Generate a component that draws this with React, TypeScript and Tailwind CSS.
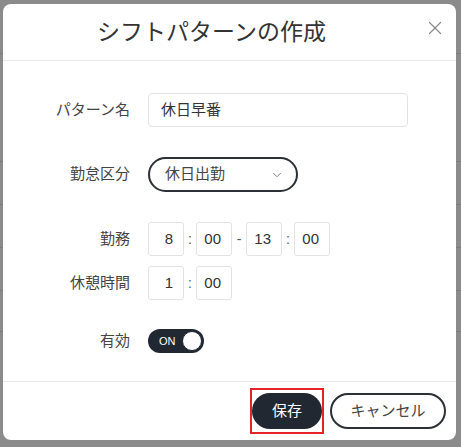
import React from "react";
import { ChevronDown, X } from "lucide-react";

const font = {
  fontFamily: '"Liberation Sans", "Noto Sans CJK JP", sans-serif',
};

const TimeBox = ({ value }: { value: string }) => (
  <div className="w-[36px] h-[34px] border border-[#e3e3e3] rounded-[3px] flex items-center justify-end pr-[10px] text-[15px] text-[#333]">
    {value}
  </div>
);

const Sep = ({ char }: { char: string }) => (
  <span className="w-[12px] text-center text-[14px] text-[#555]">{char}</span>
);

const Row = ({ label, children, className = "" }: { label: string; children: React.ReactNode; className?: string }) => (
  <div className={`flex items-center gap-[18px] ${className}`}>
    <div className="w-[127px] text-right text-[15px] text-[#444]">{label}</div>
    {children}
  </div>
);

const App = () => {
  const bgRows = ["h-[54px]", "h-[108px]", "h-[43px]", "h-[43px]", "h-[43px]", "h-[41px]"];

  return (
    <div className="relative w-[461px] h-[447px] bg-[#8b8b8b] overflow-hidden" style={font}>
      {/* table behind the overlay */}
      <div className="flex flex-col">
        {bgRows.map((h, i) => (
          <div key={i} className={`${h} border-b border-[#7c7c7c]`} />
        ))}
      </div>

      <div className="absolute left-[3px] top-[4px] w-[453px] h-[436px] bg-white rounded-lg flex flex-col">
        <div className="h-[57px] flex items-center border-b border-[#e8e8e8]">
          <h1 className="flex-1 text-center text-[23px] text-[#333] pl-[2px]">シフトパターンの作成</h1>
          <button className="w-[34px] h-[34px] flex items-center justify-center mr-[4px] -mt-[8px] text-[#8a8a8a]">
            <X size={22} strokeWidth={1.3} />
          </button>
        </div>

        <div className="flex-1 flex flex-col pt-[32px]">
          <Row label="パターン名">
            <div className="w-[260px] h-[34px] border border-[#e3e3e3] rounded-[4px] flex items-center px-[12px] text-[15px] text-[#333]">
              休日早番
            </div>
          </Row>

          <Row label="勤怠区分" className="mt-[30px]">
            <div className="w-[150px] h-[35px] border-2 border-[#2b2f36] rounded-full flex items-center justify-between pl-[15px] pr-[12px] text-[15px] text-[#444]">
              <span>休日出勤</span>
              <ChevronDown size={14} strokeWidth={1.4} className="text-[#666]" />
            </div>
          </Row>

          <Row label="勤務" className="mt-[30px]">
            <div className="flex items-center">
              <TimeBox value="8" />
              <Sep char=":" />
              <TimeBox value="00" />
              <span className="w-[14px] text-center text-[14px] text-[#555]">-</span>
              <TimeBox value="13" />
              <Sep char=":" />
              <TimeBox value="00" />
            </div>
          </Row>

          <Row label="休憩時間" className="mt-[10px]">
            <div className="flex items-center">
              <TimeBox value="1" />
              <Sep char=":" />
              <TimeBox value="00" />
            </div>
          </Row>

          <Row label="有効" className="mt-[29px]">
            <div className="w-[56px] h-[24px] rounded-full bg-[#222831] flex items-center justify-between pl-[11px] pr-[2px]">
              <span className="text-[11px] text-white">ON</span>
              <span className="w-[20px] h-[20px] rounded-full bg-white border border-[#222831]" />
            </div>
          </Row>
        </div>

        <div className="h-[59px] border-t border-[#e8e8e8] flex items-center justify-end gap-[6px] pr-[10px]">
          <div className="border-2 border-[#e8232a] py-[3px]">
            <button className="w-[70px] h-[36px] rounded-full bg-[#222831] text-white text-[15px]">保存</button>
          </div>
          <button className="w-[116px] h-[36px] rounded-full border-2 border-[#2b2f36] bg-white text-[#444] text-[15px]">
            キャンセル
          </button>
        </div>
      </div>
    </div>
  );
};

export default App;
